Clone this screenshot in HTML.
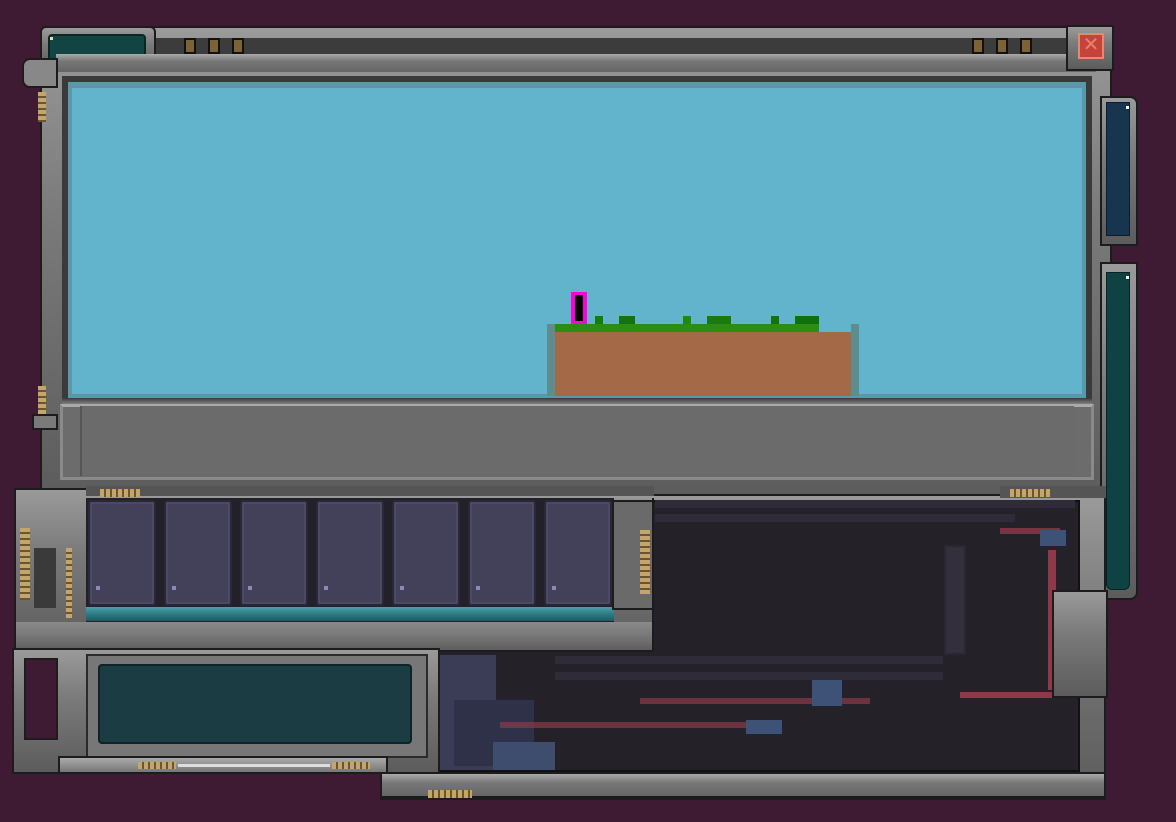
<!DOCTYPE html>
<html><head><style>
*{margin:0;padding:0;box-sizing:border-box}
body{width:1176px;height:822px;background:#3f1b33;position:relative;overflow:hidden;font-family:"Liberation Sans",sans-serif}
div{position:absolute}
.m{background:linear-gradient(#9a9a9a,#7a7a7a 40%,#5c5c5c);border:2px solid #1c1c1c}
.g{background:#6c6c6c}
.brass{background:repeating-linear-gradient(90deg,#c4a56a 0 4px,#6b5530 4px 6px)}
.brassv{background:repeating-linear-gradient(#c4a56a 0 4px,#6b5530 4px 6px)}
.slot{top:500px;width:68px;height:106px;background:#43415a;border:2px solid #2a2836;border-radius:3px;box-shadow:inset 0 0 0 2px #4b4963}
.slot:after{content:"";position:absolute;left:6px;bottom:14px;width:4px;height:4px;background:#8e88b8}
.tb{top:607px;height:14px;background:linear-gradient(#4ea0aa,#2d7b86 50%,#1e5a63)}
.pipe{height:8px;background:#2f2c3a}
.w{background:#8c3a48}
</style></head><body>

<!-- top frame -->
<div class="m" style="left:40px;top:26px;width:1072px;height:474px;border-radius:6px"></div>
<div style="left:40px;top:38px;width:1040px;height:16px;background:#3c3c3c"></div>
<div class="m" style="left:40px;top:26px;width:116px;height:46px;border-radius:6px"></div>
<div style="left:48px;top:34px;width:98px;height:30px;background:#134444;border:2px solid #0a2626;border-radius:4px"></div>
<div style="left:50px;top:37px;width:3px;height:3px;background:#e8e4a0"></div>
<!-- brass studs -->
<div style="left:184px;top:38px;width:12px;height:16px;background:#7c6236;border:2px solid #111"></div>
<div style="left:208px;top:38px;width:12px;height:16px;background:#7c6236;border:2px solid #111"></div>
<div style="left:232px;top:38px;width:12px;height:16px;background:#7c6236;border:2px solid #111"></div>
<div style="left:972px;top:38px;width:12px;height:16px;background:#7c6236;border:2px solid #111"></div>
<div style="left:996px;top:38px;width:12px;height:16px;background:#7c6236;border:2px solid #111"></div>
<div style="left:1020px;top:38px;width:12px;height:16px;background:#7c6236;border:2px solid #111"></div>
<div style="left:56px;top:54px;width:1040px;height:18px;background:linear-gradient(#aaa,#777 40%,#666)"></div>
<div style="left:22px;top:58px;width:36px;height:30px;background:#888;border:2px solid #1c1c1c;border-radius:8px 0 0 8px"></div>
<div class="brassv" style="left:38px;top:92px;width:8px;height:30px"></div>
<div class="brassv" style="left:38px;top:386px;width:8px;height:28px"></div>
<div style="left:32px;top:414px;width:26px;height:16px;background:#7a7a7a;border:2px solid #1c1c1c"></div>
<!-- close -->
<div class="m" style="left:1066px;top:25px;width:48px;height:46px"></div>
<div style="left:1078px;top:33px;width:26px;height:26px;background:#c4433a;border:2px solid #e58a6a;color:#e8806a;font-size:20px;line-height:20px;text-align:center">✕</div>
<!-- window inner -->
<div style="left:62px;top:76px;width:1030px;height:330px;background:#3a3a3a"></div>
<div style="left:68px;top:82px;width:1018px;height:316px;background:#5a97a8"></div>
<div style="left:72px;top:88px;width:1010px;height:306px;background:#62b4cc"></div>
<div style="left:62px;top:398px;width:1030px;height:8px;background:linear-gradient(#3a3a3a,#999)"></div>
<div style="left:60px;top:404px;width:1034px;height:76px;background:#6c6c6c;border:3px solid #8a8a8a;border-top-color:#aaa"></div>
<div style="left:80px;top:406px;width:994px;height:70px;background:#6b6b6b;border-left:2px solid #555"></div>
<!-- terrain -->
<div style="left:547px;top:324px;width:8px;height:72px;background:#5e8d90"></div>
<div style="left:851px;top:324px;width:8px;height:72px;background:#5e8d90"></div>
<div style="left:555px;top:332px;width:296px;height:64px;background:#a46a48"></div>
<div style="left:555px;top:324px;width:264px;height:8px;background:#2b8d14"></div>
<div style="left:595px;top:316px;width:8px;height:8px;background:#177a12"></div>
<div style="left:619px;top:316px;width:16px;height:8px;background:#177012"></div>
<div style="left:683px;top:316px;width:8px;height:8px;background:#228812"></div>
<div style="left:707px;top:316px;width:24px;height:8px;background:#1a7a10"></div>
<div style="left:771px;top:316px;width:8px;height:8px;background:#177012"></div>
<div style="left:795px;top:316px;width:24px;height:8px;background:#11700e"></div>
<div style="left:571px;top:292px;width:16px;height:32px;background:#ff00d8;border:3px solid #ff00d8;border-left-width:4px;border-right-width:4px"></div>
<div style="left:575px;top:295px;width:8px;height:26px;background:#000"></div>
<!-- right bars -->
<div class="m" style="left:1100px;top:96px;width:38px;height:150px;border-radius:0 8px 0 0"></div>
<div style="left:1106px;top:102px;width:24px;height:134px;background:#183550;border:1px solid #0c1d2c"></div>
<div class="m" style="left:1100px;top:262px;width:38px;height:338px;border-radius:0 0 8px 8px"></div>
<div style="left:1106px;top:272px;width:24px;height:318px;background:#0f4242;border:1px solid #062424;border-radius:0 0 6px 6px"></div>
<div style="left:1126px;top:106px;width:3px;height:3px;background:#fff"></div>
<div style="left:1126px;top:276px;width:3px;height:3px;background:#fff"></div>

<!-- machine area -->
<div class="m" style="left:380px;top:494px;width:726px;height:306px"></div>
<div style="left:430px;top:500px;width:650px;height:272px;background:#242128;border:2px solid #111"></div>
<div style="left:436px;top:655px;width:60px;height:115px;background:#3a3d55"></div>
<div style="left:454px;top:700px;width:80px;height:66px;background:#2e3148"></div>
<div style="left:493px;top:742px;width:62px;height:28px;background:#3e4d6e"></div>
<div class="pipe" style="left:655px;top:500px;width:420px"></div>
<div class="pipe" style="left:655px;top:514px;width:360px"></div>
<div class="pipe" style="left:555px;top:656px;width:388px"></div>
<div class="pipe" style="left:555px;top:672px;width:388px"></div>
<div style="left:944px;top:545px;width:22px;height:110px;background:#332f3c;border:2px solid #2a2733"></div>
<div class="w" style="left:1048px;top:550px;width:8px;height:140px"></div>
<div class="w" style="left:960px;top:692px;width:96px;height:6px"></div>
<div class="w" style="left:640px;top:698px;width:230px;height:6px;opacity:.7"></div>
<div class="w" style="left:500px;top:722px;width:250px;height:6px;opacity:.7"></div>
<div class="w" style="left:1000px;top:528px;width:60px;height:6px;opacity:.8"></div>
<div style="left:1040px;top:530px;width:26px;height:16px;background:#3e5278"></div>
<div style="left:746px;top:720px;width:36px;height:14px;background:#3e5278"></div>
<div style="left:812px;top:680px;width:30px;height:26px;background:#3e5278"></div>
<div class="m" style="left:1052px;top:590px;width:56px;height:108px"></div>
<div style="left:380px;top:772px;width:726px;height:26px;background:linear-gradient(#aaa,#777 40%,#666);border:2px solid #1c1c1c"></div>
<div class="brass" style="left:428px;top:790px;width:44px;height:8px"></div>

<!-- inventory -->
<div class="m" style="left:14px;top:488px;width:640px;height:164px"></div>
<div style="left:86px;top:486px;width:568px;height:12px;background:#555;border-bottom:2px solid #999"></div>
<div class="brass" style="left:100px;top:489px;width:40px;height:8px"></div>
<div class="brass" style="left:1010px;top:489px;width:40px;height:8px"></div>
<div style="left:1000px;top:486px;width:106px;height:12px;background:#555"></div>
<div class="brass" style="left:1010px;top:489px;width:40px;height:8px"></div>
<div style="left:86px;top:498px;width:528px;height:124px;background:#22212a"></div>
<div class="slot" style="left:88px"></div>
<div class="slot" style="left:164px"></div>
<div class="slot" style="left:240px"></div>
<div class="slot" style="left:316px"></div>
<div class="slot" style="left:392px"></div>
<div class="slot" style="left:468px"></div>
<div class="slot" style="left:544px"></div>
<div class="tb" style="left:86px;width:528px"></div>
<div style="left:14px;top:622px;width:640px;height:30px;background:linear-gradient(#8a8a8a,#777 50%,#5e5e5e);border:2px solid #1c1c1c;border-top:none"></div>
<div style="left:34px;top:548px;width:22px;height:60px;background:#3a3a3a"></div>
<div class="brassv" style="left:20px;top:528px;width:10px;height:72px"></div>
<div class="brassv" style="left:66px;top:548px;width:6px;height:70px"></div>
<div class="brassv" style="left:640px;top:530px;width:10px;height:64px"></div>
<div style="left:612px;top:500px;width:42px;height:110px;background:#6a6a6a;border:2px solid #1c1c1c"></div>
<div class="brassv" style="left:640px;top:530px;width:10px;height:64px"></div>

<!-- lower left panel -->
<div class="m" style="left:12px;top:648px;width:428px;height:126px"></div>
<div style="left:24px;top:658px;width:34px;height:82px;background:#3f1b33;border:2px solid #1c1c1c"></div>
<div style="left:86px;top:654px;width:342px;height:104px;background:#777;border:2px solid #2a2a2a"></div>
<div style="left:98px;top:664px;width:314px;height:80px;background:#1b3c42;border:2px solid #0d2327;border-radius:4px"></div>
<div style="left:58px;top:756px;width:330px;height:18px;background:linear-gradient(#aaa,#777);border:2px solid #1c1c1c"></div>
<div class="brass" style="left:138px;top:762px;width:38px;height:7px"></div>
<div class="brass" style="left:332px;top:762px;width:38px;height:7px"></div>
<div style="left:178px;top:764px;width:152px;height:3px;background:#ddd"></div>
</body></html>
